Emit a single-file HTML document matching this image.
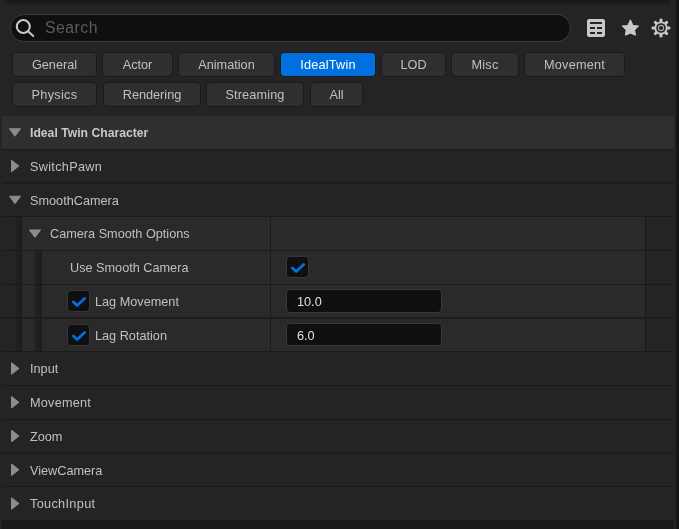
<!DOCTYPE html>
<html><head><meta charset="utf-8">
<style>
*{margin:0;padding:0;box-sizing:border-box}
html,body{will-change:transform;width:679px;height:529px;overflow:hidden;background:#242424;font-family:"Liberation Sans",sans-serif;color:#c0c0c0}
.a{position:absolute}
.t{position:absolute;white-space:nowrap;font-size:12.7px;line-height:16px}
.btn{position:absolute;height:25px;border:1px solid #1a1a1a;border-radius:4px;background:#2f2f2f;text-align:center;font-size:12.7px;line-height:24px;color:#c0c0c0;white-space:nowrap}
.btn.on{background:#0070e0;color:#fff}
.row{position:absolute;left:2px;width:672px;background:#242424}
.ln{position:absolute;left:2px;width:672px;height:1px;background:#1a1a1a}
.tri-r{position:absolute;width:0;height:0;border-top:6px solid transparent;border-bottom:6px solid transparent;border-left:8px solid #8c8c8c}
.tri-d{position:absolute;width:0;height:0;border-left:6px solid transparent;border-right:6px solid transparent;border-top:8px solid #8c8c8c}
.ind{position:absolute;width:8px;background:linear-gradient(90deg,#282828 0,#282828 1px,#222 1px,#1c1c1c 100%)}
.cb{position:absolute;width:23px;height:22px;background:#0f0f0f;border:1px solid #363636;border-radius:4px}
.inp{position:absolute;height:23px;background:#0f0f0f;border:1px solid #383838;border-radius:4px}
</style></head><body>
<!-- top strip -->
<div class="a" style="left:2px;top:4px;width:672px;height:2px;background:#212121"></div>
<div class="a" style="left:5px;top:-6px;width:666px;height:9.5px;background:#1a1a1a;border-radius:5px"></div>
<div class="a" style="left:676px;top:0;width:3px;height:529px;background:#151515"></div>

<!-- search -->
<div class="a" style="left:10px;top:14px;width:561px;height:28px;border-radius:14px;background:#0f0f0f;border:1px solid #3a3a3a"></div>
<svg class="a" style="left:12px;top:16px" width="26" height="24" viewBox="0 0 26 24">
  <circle cx="11.3" cy="10.5" r="6.5" fill="none" stroke="#c8c8c8" stroke-width="2.1"/>
  <line x1="16" y1="15.2" x2="21.3" y2="20" stroke="#c8c8c8" stroke-width="2" stroke-linecap="round"/>
</svg>
<div class="t" style="left:45px;top:18.5px;font-size:15.8px;letter-spacing:0.5px;line-height:18px;color:#5c5c5c">Search</div>

<!-- icons -->
<svg class="a" style="left:587px;top:19px" width="18" height="18" viewBox="0 0 18 18">
  <rect x="0" y="0" width="18" height="18" rx="2" fill="#c8c8c8"/>
  <rect x="3" y="3" width="12" height="2" fill="#242424"/>
  <rect x="3" y="8" width="5" height="2" fill="#242424"/>
  <rect x="10" y="8" width="5" height="2" fill="#242424"/>
  <rect x="3" y="13" width="5" height="2" fill="#242424"/>
  <rect x="10" y="13" width="5" height="2" fill="#242424"/>
</svg>
<svg class="a" style="left:620px;top:18px" width="21" height="20" viewBox="0 0 21 20">
  <polygon points="10.4,1.8 13.0,7.6 18.6,7.9 14.6,12.0 15.5,17.2 10.4,15.2 5.3,17.2 6.2,12.0 2.2,7.9 7.8,7.6" fill="#c8c8c8" stroke="#c8c8c8" stroke-width="1" stroke-linejoin="round"/>
</svg>
<svg class="a" style="left:650px;top:17px" width="22" height="22" viewBox="0 0 22 22">
  <g fill="#c8c8c8" transform="translate(11 11)">
    <circle r="6.6"/>
    <rect x="-1.5" y="-9.4" width="3" height="5" rx="1.2"/>
    <rect x="-1.5" y="-9.4" width="3" height="5" rx="1.2" transform="rotate(45)"/>
    <rect x="-1.5" y="-9.4" width="3" height="5" rx="1.2" transform="rotate(90)"/>
    <rect x="-1.5" y="-9.4" width="3" height="5" rx="1.2" transform="rotate(135)"/>
    <rect x="-1.5" y="-9.4" width="3" height="5" rx="1.2" transform="rotate(180)"/>
    <rect x="-1.5" y="-9.4" width="3" height="5" rx="1.2" transform="rotate(225)"/>
    <rect x="-1.5" y="-9.4" width="3" height="5" rx="1.2" transform="rotate(270)"/>
    <rect x="-1.5" y="-9.4" width="3" height="5" rx="1.2" transform="rotate(315)"/>
    <circle r="4.8" fill="#242424"/>
    <circle r="3.2" fill="#a8a8a8"/>
    <circle r="2.1" fill="#242424"/>
  </g>
</svg>

<!-- filter buttons -->
<div class="btn" style="left:12px;top:52px;width:85px">General</div>
<div class="btn" style="left:102px;top:52px;width:71px">Actor</div>
<div class="btn" style="left:178px;top:52px;width:97px">Animation</div>
<div class="btn on" style="left:280px;top:52px;width:96px;letter-spacing:0.2px">IdealTwin</div>
<div class="btn" style="left:381px;top:52px;width:65px">LOD</div>
<div class="btn" style="left:451px;top:52px;width:68px;letter-spacing:0.25px">Misc</div>
<div class="btn" style="left:524px;top:52px;width:101px;letter-spacing:0.2px">Movement</div>
<div class="btn" style="left:12px;top:82px;width:85px;letter-spacing:0.3px">Physics</div>
<div class="btn" style="left:103px;top:82px;width:98px">Rendering</div>
<div class="btn" style="left:206px;top:82px;width:98px;letter-spacing:0.15px">Streaming</div>
<div class="btn" style="left:310px;top:82px;width:53px">All</div>

<!-- details rows -->
<div class="row" style="top:116px;height:33px;background:#2f2f2f"></div>
<div class="a" style="left:22px;top:217px;width:652px;height:134px;background:#2a2a2a"></div>
<div class="a" style="left:646px;top:217px;width:28px;height:134px;background:#242424"></div>
<div class="ind" style="left:14px;top:217px;height:134px"></div>
<div class="ind" style="left:34px;top:251px;height:100px"></div>
<div class="a" style="left:270px;top:217px;width:1px;height:134px;background:#1a1a1a"></div>
<div class="a" style="left:645px;top:217px;width:1px;height:134px;background:#1a1a1a"></div>
<div class="ln" style="top:149px;height:1px;background:#1a1a1a"></div>
<div class="ln" style="top:182px;height:2px;background:#1c1c1c"></div>
<div class="ln" style="top:216px;height:1px;background:#1a1a1a"></div>
<div class="ln" style="top:250px;height:1px;background:#1a1a1a"></div>
<div class="ln" style="top:284px;height:1px;background:#1a1a1a"></div>
<div class="ln" style="top:317px;height:2px;background:#1c1c1c"></div>
<div class="ln" style="top:351px;height:1px;background:#1a1a1a"></div>
<div class="ln" style="top:385px;height:1px;background:#1a1a1a"></div>
<div class="ln" style="top:419px;height:1px;background:#1a1a1a"></div>
<div class="ln" style="top:452px;height:2px;background:#1c1c1c"></div>
<div class="ln" style="top:486px;height:1px;background:#1a1a1a"></div>
<svg class="a" style="left:8px;top:124px" width="16" height="16" viewBox="0 0 16 16"><polygon points="1.6,4.75 12.4,4.75 7,11.85" fill="#8c8c8c" stroke="#8c8c8c" stroke-width="1.2" stroke-linejoin="round"/></svg>
<div class="t" style="left:30px;top:125px;font-weight:bold;color:#c8c8c8;font-size:12.2px">Ideal Twin Character</div>
<svg class="a" style="left:10px;top:158px" width="12" height="16" viewBox="0 0 12 16"><polygon points="1.6,2.60 8.6,8.00 1.6,13.40" fill="#8c8c8c" stroke="#8c8c8c" stroke-width="1.2" stroke-linejoin="round"/></svg>
<div class="t" style="left:30px;top:159px;letter-spacing:0.3px">SwitchPawn</div>
<svg class="a" style="left:8px;top:191px" width="16" height="16" viewBox="0 0 16 16"><polygon points="1.6,5.25 12.4,5.25 7,12.35" fill="#8c8c8c" stroke="#8c8c8c" stroke-width="1.2" stroke-linejoin="round"/></svg>
<div class="t" style="left:30px;top:193px;">SmoothCamera</div>
<svg class="a" style="left:28px;top:225px" width="16" height="16" viewBox="0 0 16 16"><polygon points="1.6,5.00 12.4,5.00 7,12.10" fill="#8c8c8c" stroke="#8c8c8c" stroke-width="1.2" stroke-linejoin="round"/></svg>
<div class="t" style="left:50px;top:226px;">Camera Smooth Options</div>
<div class="t" style="left:70px;top:260px;">Use Smooth Camera</div>
<div class="cb" style="left:286px;top:256px"></div>
<svg class="a" style="left:286px;top:256px" width="23" height="22" viewBox="0 0 23 22"><polyline points="6.35,12 10.15,15.5 17.65,8.5" fill="none" stroke="#0070e0" stroke-width="2.8" stroke-linecap="round" stroke-linejoin="round"/></svg>
<div class="cb" style="left:67px;top:290px"></div>
<svg class="a" style="left:67px;top:290px" width="23" height="22" viewBox="0 0 23 22"><polyline points="6.35,12 10.15,15.5 17.65,8.5" fill="none" stroke="#0070e0" stroke-width="2.8" stroke-linecap="round" stroke-linejoin="round"/></svg>
<div class="t" style="left:95px;top:294px;">Lag Movement</div>
<div class="inp" style="left:286px;top:289px;width:156px;height:24px"></div>
<div class="t" style="left:297px;top:294px;color:#e0e0e0">10.0</div>
<div class="cb" style="left:67px;top:324px"></div>
<svg class="a" style="left:67px;top:324px" width="23" height="22" viewBox="0 0 23 22"><polyline points="6.35,12 10.15,15.5 17.65,8.5" fill="none" stroke="#0070e0" stroke-width="2.8" stroke-linecap="round" stroke-linejoin="round"/></svg>
<div class="t" style="left:95px;top:328px;">Lag Rotation</div>
<div class="inp" style="left:286px;top:323px;width:156px"></div>
<div class="t" style="left:297px;top:328px;color:#e0e0e0">6.0</div>
<svg class="a" style="left:10px;top:360px" width="12" height="16" viewBox="0 0 12 16"><polygon points="1.6,3.10 8.6,8.50 1.6,13.90" fill="#8c8c8c" stroke="#8c8c8c" stroke-width="1.2" stroke-linejoin="round"/></svg>
<div class="t" style="left:30px;top:361px;letter-spacing:0px">Input</div>
<svg class="a" style="left:10px;top:394px" width="12" height="16" viewBox="0 0 12 16"><polygon points="1.6,2.85 8.6,8.25 1.6,13.65" fill="#8c8c8c" stroke="#8c8c8c" stroke-width="1.2" stroke-linejoin="round"/></svg>
<div class="t" style="left:30px;top:395px;letter-spacing:0.22px">Movement</div>
<svg class="a" style="left:10px;top:428px" width="12" height="16" viewBox="0 0 12 16"><polygon points="1.6,2.60 8.6,8.00 1.6,13.40" fill="#8c8c8c" stroke="#8c8c8c" stroke-width="1.2" stroke-linejoin="round"/></svg>
<div class="t" style="left:30px;top:429px;letter-spacing:0px">Zoom</div>
<svg class="a" style="left:10px;top:461px" width="12" height="16" viewBox="0 0 12 16"><polygon points="1.6,3.35 8.6,8.75 1.6,14.15" fill="#8c8c8c" stroke="#8c8c8c" stroke-width="1.2" stroke-linejoin="round"/></svg>
<div class="t" style="left:30px;top:463px;letter-spacing:0px">ViewCamera</div>
<svg class="a" style="left:10px;top:495px" width="12" height="16" viewBox="0 0 12 16"><polygon points="1.6,3.10 8.6,8.50 1.6,13.90" fill="#8c8c8c" stroke="#8c8c8c" stroke-width="1.2" stroke-linejoin="round"/></svg>
<div class="t" style="left:30px;top:496px;letter-spacing:0.33px">TouchInput</div>
<div class="a" style="left:2px;top:520px;width:672px;height:9px;background:#1a1a1a"></div>
</body></html>
